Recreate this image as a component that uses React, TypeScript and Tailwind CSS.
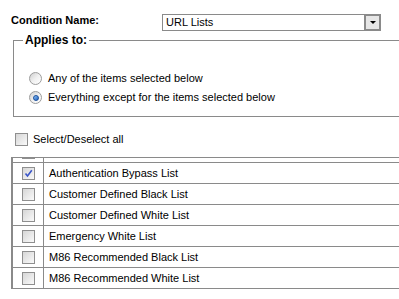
import React from 'react';

const items = [
  { label: 'Anonymizers and Proxy Sites', checked: false },
  { label: 'Authentication Bypass List', checked: true },
  { label: 'Customer Defined Black List', checked: false },
  { label: 'Customer Defined White List', checked: false },
  { label: 'Emergency White List', checked: false },
  { label: 'M86 Recommended Black List', checked: false },
  { label: 'M86 Recommended White List', checked: false },
];

function Radio({ selected }: { selected?: boolean }) {
  return (
    <span className="relative w-[13px] h-[13px] rounded-full border border-[#9c9c9c] bg-gradient-to-br from-[#cfcfcf] via-[#f0f0f0] to-white flex items-center justify-center shrink-0">
      {selected && (
        <span className="w-[6px] h-[6px] rounded-full bg-gradient-to-br from-[#8cc2f5] to-[#1f5fbf] border border-[#1a4f9c]" />
      )}
    </span>
  );
}

function Checkbox({ checked }: { checked?: boolean }) {
  return (
    <span className="w-[13px] h-[13px] border border-[#8f8f8f] bg-gradient-to-br from-[#d6d6d6] to-[#fafafa] flex items-center justify-center shrink-0">
      {checked && (
        <svg width="9" height="9" viewBox="0 0 9 9">
          <path d="M1.5 4.5 L3.5 7 L7.8 1.2" fill="none" stroke="#3a55c8" strokeWidth="1.6" />
        </svg>
      )}
    </span>
  );
}

export default function App() {
  return (
    <div
      className="w-[399px] h-[299px] overflow-hidden bg-white text-black text-[11px] leading-[13px]"
      style={{ fontFamily: '"Liberation Sans", Arial, sans-serif' }}
    >
      {/* condition name row */}
      <div className="flex items-start pt-[14px] pl-[11px]">
        <div className="w-[151px] font-bold">Condition Name:</div>
        <div className="w-[219px] h-[17px] border border-[#8a8a8a] flex items-center justify-between">
          <span className="pl-[3px]">URL Lists</span>
          <span className="w-[17px] h-[17px] -mr-px border-2 border-[#8a8a8a] bg-[#e6e6e6] flex items-center justify-center">
            <span className="w-0 h-0 border-l-[3px] border-r-[3px] border-t-[3px] border-l-transparent border-r-transparent border-t-black" />
          </span>
        </div>
      </div>

      {/* applies to */}
      <fieldset className="mt-[3px] ml-[13px] w-[400px] h-[83px] border border-r-0 border-[#8a8a8a] pl-[9px]">
        <legend className="px-[2px] font-bold text-[12px] leading-[13px]">Applies to:</legend>
        <div className="flex flex-col gap-[6px] pt-[25px] pl-[6px]">
          <label className="flex items-center gap-[6px] h-[13px]">
            <Radio />
            <span>Any of the items selected below</span>
          </label>
          <label className="flex items-center gap-[6px] h-[13px]">
            <Radio selected />
            <span>Everything except for the items selected below</span>
          </label>
        </div>
      </fieldset>

      {/* select all */}
      <label className="flex items-center gap-[5px] mt-[16px] ml-[15px] h-[13px]">
        <Checkbox />
        <span>Select/Deselect all</span>
      </label>

      {/* list */}
      <div className="mt-[11px] ml-[11px] w-[400px] h-[132px] overflow-hidden border-t border-b border-l-2 border-[#8a8a8a]">
        <div className="-mt-[16px]">
          {items.map((item) => (
            <div key={item.label} className="flex h-[21px] border-b border-[#8a8a8a]">
              <div className="w-[31px] border-r border-[#8a8a8a] flex items-center justify-center">
                <Checkbox checked={item.checked} />
              </div>
              <div className="flex items-center pl-[5px]">{item.label}</div>
            </div>
          ))}
        </div>
      </div>
    </div>
  );
}
